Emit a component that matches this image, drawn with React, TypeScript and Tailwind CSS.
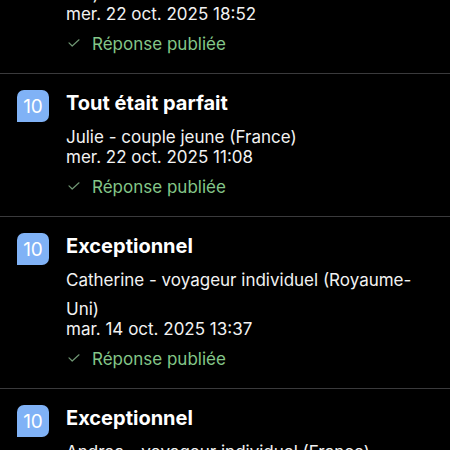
import React from "react";

type Review = {
  score: string;
  title: string;
  author: string;
  date: string;
};

const reviews: Review[] = [
  {
    score: "10",
    title: "Exceptionnel",
    author: "Elizabeth - voyageur individuel (Royaume-Uni)",
    date: "mer. 22 oct. 2025 18:52",
  },
  {
    score: "10",
    title: "Tout était parfait",
    author: "Julie - couple jeune (France)",
    date: "mer. 22 oct. 2025 11:08",
  },
  {
    score: "10",
    title: "Exceptionnel",
    author: "Catherine - voyageur individuel (Royaume-Uni)",
    date: "mar. 14 oct. 2025 13:37",
  },
  {
    score: "10",
    title: "Exceptionnel",
    author: "Andrea - voyageur individuel (France)",
    date: "lun. 13 oct. 2025 09:14",
  },
];

const CheckIcon = () => (
  <svg width="12" height="8" viewBox="0 0 12 8" fill="none" className="shrink-0">
    <path
      d="M1 3.8L4.2 7L11 0.8"
      stroke="#6f9673"
      strokeWidth="1.2"
      strokeLinecap="round"
      strokeLinejoin="round"
    />
  </svg>
);

const ReviewRow = ({ review }: { review: Review }) => {
  return (
    <div className="flex items-start border-b border-[#3a3a3c] pt-4 pb-[18px] pl-[17px] pr-4">
      <div className="flex h-8 w-8 shrink-0 items-center justify-center rounded-[7px] rounded-bl-none bg-[#80b2f6] text-[19px] leading-none text-white">
        {review.score}
      </div>
      <div className="ml-[17px] mt-[1px] flex min-w-0 flex-1 flex-col text-white">
        <div className="text-[20px] font-bold leading-[24px]">{review.title}</div>
        <div className="mt-2 text-[17px] leading-[29px] text-[#f2f2f2]">
          {review.author}
        </div>
        <div className="-mt-[6px] text-[17px] leading-[22px] text-[#f2f2f2]">
          {review.date}
        </div>
        <div className="mt-2 flex items-center text-[17px] leading-[22px] text-[#84c688]">
          <span className="ml-[2px] mr-[12px] mb-[3px]">
            <CheckIcon />
          </span>
          Réponse publiée
        </div>
      </div>
    </div>
  );
};

export default function App() {
  return (
    <div
      className="h-[450px] w-[450px] overflow-hidden bg-black"
      style={{ fontFamily: "Inter, 'Noto Sans', sans-serif" }}
    >
      <div className="-mt-[98px]">
        {reviews.map((review, index) => (
          <ReviewRow key={index} review={review} />
        ))}
      </div>
    </div>
  );
}
